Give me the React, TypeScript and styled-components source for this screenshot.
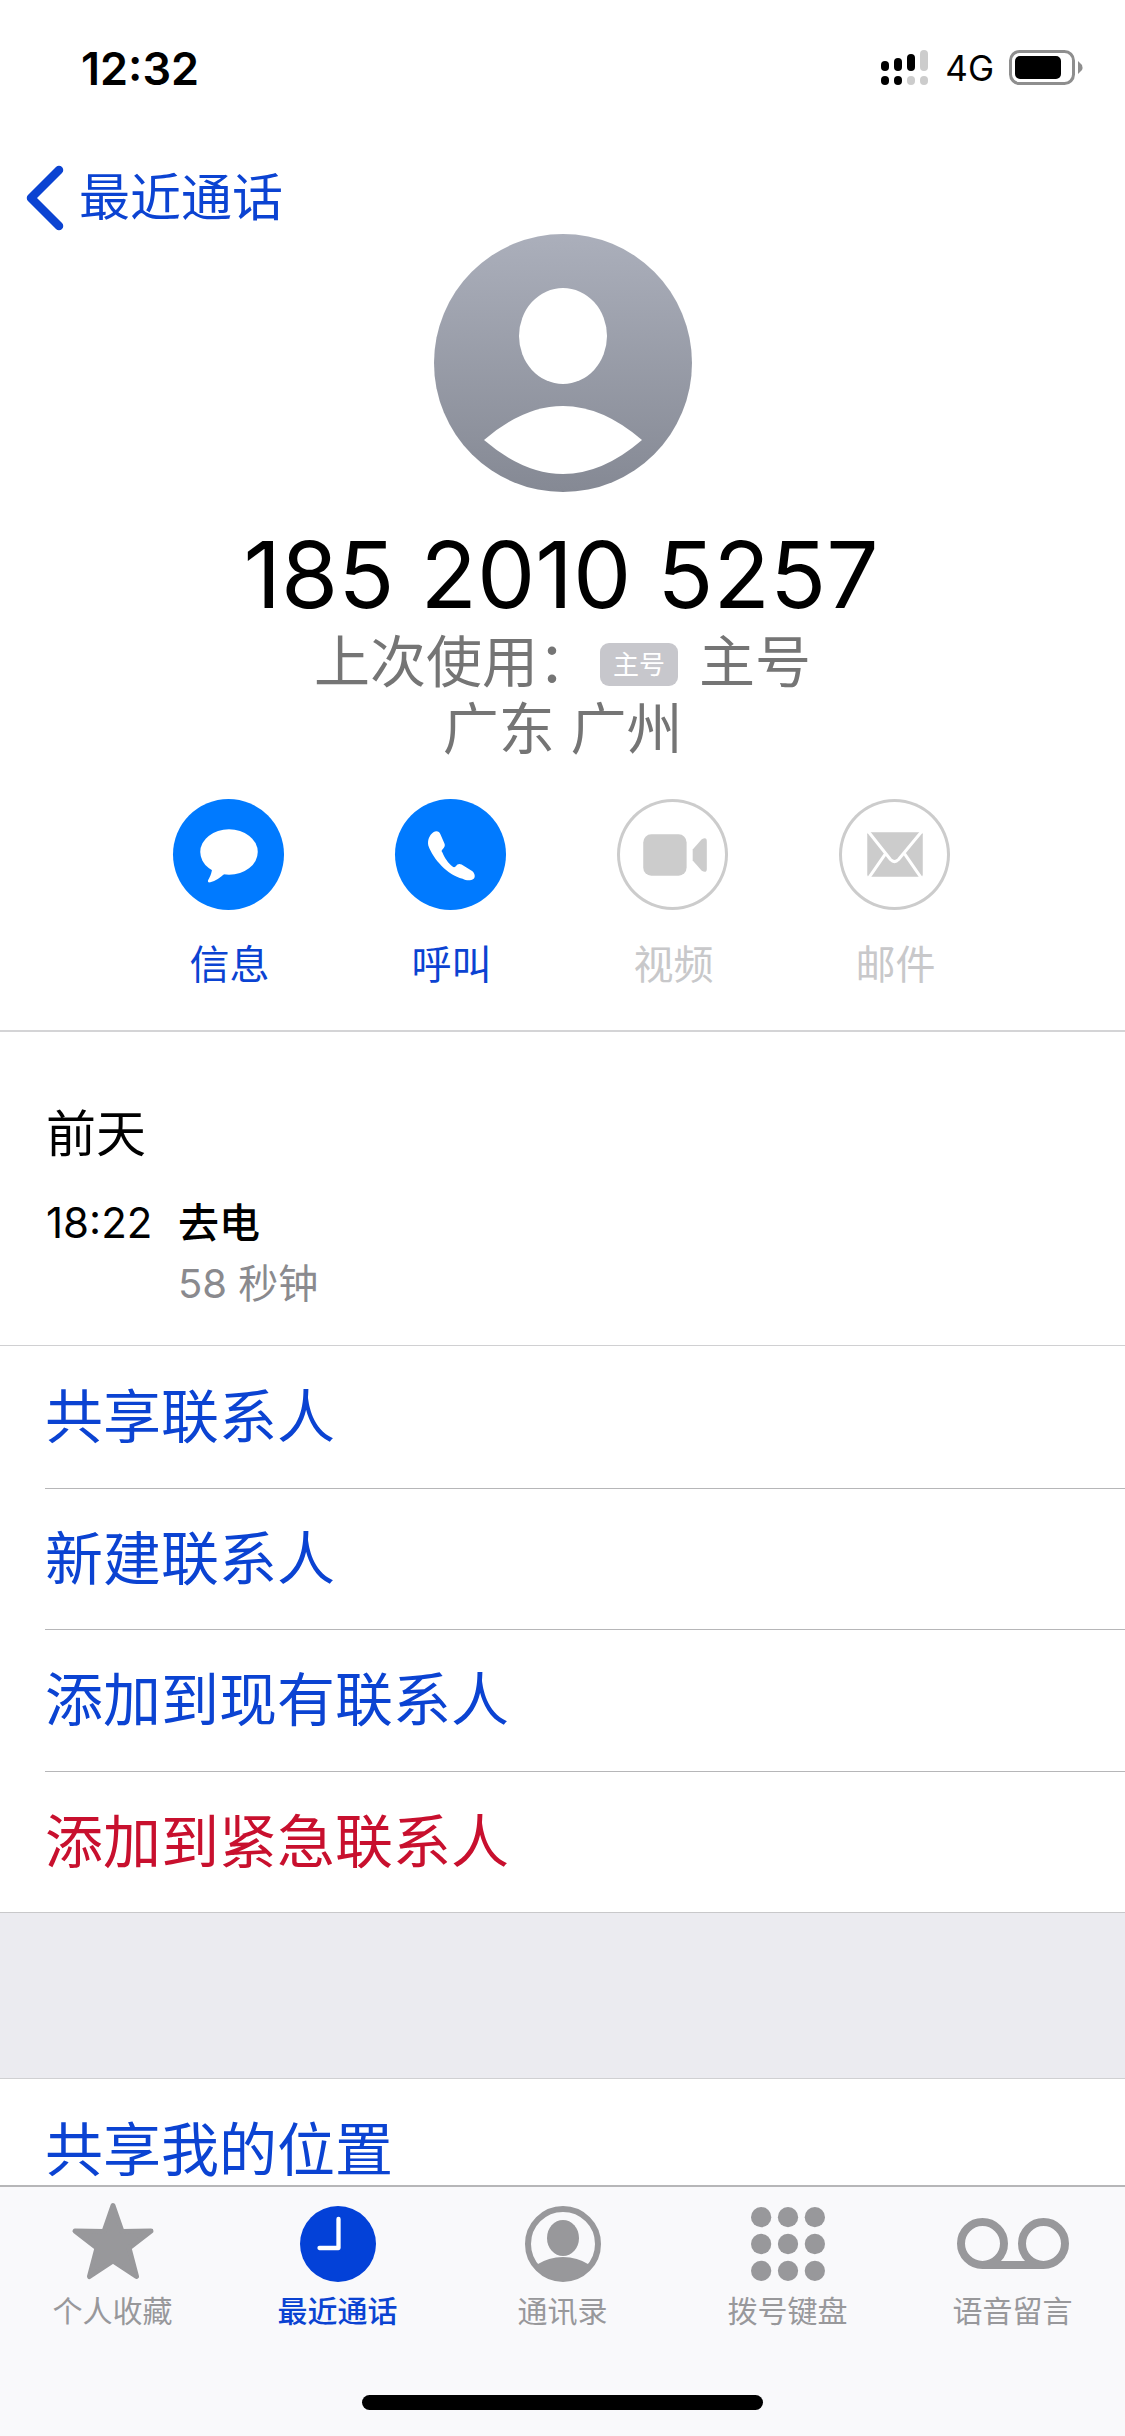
import React from 'react';
import styled, { createGlobalStyle } from 'styled-components';

const BLUE = '#0b43d2';
const RED = '#c8102e';
const GREY_ICON = '#98989b';
const LINE = '#b6b6b8';

const GlobalStyle = createGlobalStyle`
    html, body {
        margin: 0;
        padding: 0;
        background: #fff;
    }
    * {
        box-sizing: border-box;
    }
`;

const SignalIcon = () => (
    <svg width="48" height="36" viewBox="0 0 48 36">
        <rect x="0" y="11" width="8" height="10" rx="4" fill="#000" />
        <rect x="13" y="8" width="8" height="13" rx="4" fill="#000" />
        <rect x="26" y="4" width="8" height="17" rx="4" fill="#000" />
        <rect x="39" y="0" width="8" height="21" rx="4" fill="#ccc" />
        <rect x="0" y="26" width="8" height="9" rx="4" fill="#000" />
        <rect x="13" y="26" width="8" height="9" rx="4" fill="#000" />
        <rect x="26" y="26" width="8" height="9" rx="4" fill="#ccc" />
        <rect x="39" y="26" width="8" height="9" rx="4" fill="#ccc" />
    </svg>
);

const BatteryIcon = () => (
    <svg width="74" height="36" viewBox="0 0 74 36">
        <rect x="1.500" y="1.500" width="63" height="32" rx="9" fill="none" stroke="#8e8e8e" strokeWidth="3" />
        <rect x="6" y="6" width="46" height="23" rx="5" fill="#000" />
        <path d="M69 11 L73 15 Q74 17.500 73 20 L69 24 Z" fill="#8e8e8e" />
    </svg>
);

const BackChevron = () => (
    <svg width="40" height="68" viewBox="0 0 40 68">
        <path d="M33 7 L5 35 L33 63" fill="none" stroke={BLUE} strokeWidth="8.500" strokeLinecap="round" strokeLinejoin="round" />
    </svg>
);

const AvatarIcon = () => (
    <svg width="258" height="258" viewBox="0 0 258 258">
        <defs>
            <linearGradient id="avatarFill" x1="0" y1="0" x2="0" y2="1">
                <stop offset="0" stopColor="#abafbb" />
                <stop offset="1" stopColor="#858994" />
            </linearGradient>
        </defs>
        <circle cx="129" cy="129" r="129" fill="url(#avatarFill)" />
        <ellipse cx="129" cy="102" rx="44" ry="48" fill="#fff" />
        <path d="M50 206 Q129 138 208 206 Q129 274 50 206 Z" fill="#fff" />
    </svg>
);

const BubbleGlyph = () => (
    <svg viewBox="0 0 110 110">
        <ellipse cx="55.500" cy="52.500" rx="28.500" ry="22.500" fill="#fff" />
        <path d="M39 66 C39 72 37 77 35 80 C34 82 35 83 37 82.500 C42 81 47 78 51 74 Z" fill="#fff" />
    </svg>
);

const PhoneGlyph = () => (
    <svg viewBox="0 0 110 110">
        <path
            d="M38 33 C41 31 44 32 45 35 L49 44 C50 46 49 48 47 50 C46 51 46 52 47 53 C49 58 53 64 57 67 C58 68 59 68 60 67 C62 64 64 64 66 65 L76 71 C79 73 80 77 78 79 C75 81 71 81 67 79 C52 75 38 60 33 46 C32 41 34 36 38 33 Z"
            fill="#fff"
        />
    </svg>
);

const VideoGlyph = () => (
    <svg viewBox="0 0 110 110">
        <rect x="26" y="35" width="43" height="41" rx="8" fill="#ccc" />
        <path d="M75 50 L84 40 Q89 37 89 42 L89 69 Q89 74 84 71 L75 61 Z" fill="#ccc" />
    </svg>
);

const MailGlyph = () => (
    <svg viewBox="0 0 110 110">
        <rect x="28" y="33" width="55" height="44" rx="2" fill="#ccc" />
        <path d="M28 31 L51 60 Q55 64 59 60 L83 31 M29 79 L47 53 M82 79 L64 53" fill="none" stroke="#fff" strokeWidth="3" />
    </svg>
);

const StarIcon = () => (
    <svg width="84" height="84" viewBox="0 0 84 84">
        <path
            d="M42 3.500 L51 29.500 L80 29 L58 46 L65.500 74.500 L42 59 L18.500 74.500 L26 46 L4 29 L33 29.500 Z"
            fill={GREY_ICON}
            stroke={GREY_ICON}
            strokeWidth="5"
            strokeLinejoin="round"
        />
    </svg>
);

const ClockIcon = () => (
    <svg width="76" height="76" viewBox="0 0 76 76">
        <circle cx="38" cy="38" r="38" fill="#0341d8" />
        <path d="M38.500 13 L38.500 42 L19.500 42" fill="none" stroke="#fff" strokeWidth="4.300" strokeLinecap="round" strokeLinejoin="round" />
    </svg>
);

const PersonIcon = () => (
    <svg width="78" height="76" viewBox="0 0 78 76">
        <defs>
            <clipPath id="personClip">
                <circle cx="39" cy="38" r="37" />
            </clipPath>
        </defs>
        <circle cx="39" cy="38" r="35" fill="none" stroke={GREY_ICON} strokeWidth="6" />
        <ellipse cx="39" cy="32" rx="16" ry="18" fill={GREY_ICON} />
        <ellipse cx="39" cy="76" rx="36" ry="25" fill={GREY_ICON} clipPath="url(#personClip)" />
    </svg>
);

const KeypadIcon = () => {
    const spots = [10, 36.500, 63];
    return (
        <svg width="74" height="74" viewBox="0 0 73 73">
            {spots.map((cy) =>
                spots.map((cx) => <circle key={`${cx}-${cy}`} cx={cx} cy={cy} r="10" fill={GREY_ICON} />)
            )}
        </svg>
    );
};

const VoicemailIcon = () => (
    <svg width="112" height="52" viewBox="0 0 112 52">
        <circle cx="25.500" cy="25.500" r="21.500" fill="none" stroke={GREY_ICON} strokeWidth="8" />
        <circle cx="86.500" cy="25.500" r="21.500" fill="none" stroke={GREY_ICON} strokeWidth="8" />
        <path d="M25.500 47 L86.500 47" stroke={GREY_ICON} strokeWidth="8" />
    </svg>
);

const actions = [
    { label: '信息', active: true, glyph: <BubbleGlyph /> },
    { label: '呼叫', active: true, glyph: <PhoneGlyph /> },
    { label: '视频', active: false, glyph: <VideoGlyph /> },
    { label: '邮件', active: false, glyph: <MailGlyph /> },
];

const links = [
    { label: '共享联系人', danger: false },
    { label: '新建联系人', danger: false },
    { label: '添加到现有联系人', danger: false },
    { label: '添加到紧急联系人', danger: true },
];

const tabs = [
    { label: '个人收藏', icon: <StarIcon />, active: false },
    { label: '最近通话', icon: <ClockIcon />, active: true },
    { label: '通讯录', icon: <PersonIcon />, active: false },
    { label: '拨号键盘', icon: <KeypadIcon />, active: false },
    { label: '语音留言', icon: <VoicemailIcon />, active: false },
];

const App = () => {
    return (
        <Screen>
            <GlobalStyle />
            <Content>
                <StatusBar>
                    <Clock>12:32</Clock>
                    <StatusRight>
                        <SignalIcon />
                        <Network>4G</Network>
                        <BatteryIcon />
                    </StatusRight>
                </StatusBar>
                <NavBar>
                    <BackChevron />
                    <BackLabel>最近通话</BackLabel>
                </NavBar>
                <Profile>
                    <AvatarIcon />
                    <PhoneNumber>185 2010 5257</PhoneNumber>
                    <LastUsed>
                        <span>上次使用：</span>
                        <SimBadge>主号</SimBadge>
                        <span>主号</span>
                    </LastUsed>
                    <Location>广东 广州</Location>
                    <ActionRow>
                        {actions.map((action) => (
                            <Action key={action.label}>
                                <ActionCircle $active={action.active}>{action.glyph}</ActionCircle>
                                <ActionLabel $active={action.active}>{action.label}</ActionLabel>
                            </Action>
                        ))}
                    </ActionRow>
                </Profile>
                <CallLog>
                    <CallDay>前天</CallDay>
                    <CallRow>
                        <CallTime>18:22</CallTime>
                        <div>
                            <CallType>去电</CallType>
                            <CallLength>58 秒钟</CallLength>
                        </div>
                    </CallRow>
                </CallLog>
                <LinkGroup>
                    {links.map((link) => (
                        <LinkRow key={link.label} $danger={link.danger}>
                            {link.label}
                        </LinkRow>
                    ))}
                </LinkGroup>
                <GroupGap />
                <LinkGroup>
                    <LinkRow $danger={false}>共享我的位置</LinkRow>
                </LinkGroup>
            </Content>
            <TabBar>
                <TabList>
                    {tabs.map((tab) => (
                        <Tab key={tab.label}>
                            <TabIconSlot>{tab.icon}</TabIconSlot>
                            <TabLabel $active={tab.active}>{tab.label}</TabLabel>
                        </Tab>
                    ))}
                </TabList>
                <HomeIndicator />
            </TabBar>
        </Screen>
    );
};

export default App;

const Screen = styled.div`
    width: 1125px;
    height: 2436px;
    display: flex;
    flex-direction: column;
    overflow: hidden;
    background: #fff;
    font-family: Inter, 'Noto Sans CJK SC', sans-serif;
`;

const Content = styled.div`
    flex: 1;
    min-height: 0;
    overflow: hidden;
`;

const StatusBar = styled.div`
    height: 160px;
    padding: 42px 42px 0 81px;
    display: flex;
    justify-content: space-between;
    align-items: flex-start;
`;

const Clock = styled.div`
    font-size: 45px;
    line-height: 54px;
    font-weight: 600;
    color: #000;
`;

const StatusRight = styled.div`
    display: flex;
    align-items: center;
    margin-top: 8px;
`;

const Network = styled.div`
    font-size: 35px;
    line-height: 36px;
    margin: 0 15px 0 16px;
    color: #000;
`;

const NavBar = styled.div`
    height: 74px;
    padding-left: 26px;
    display: flex;
    align-items: center;
    gap: 13px;
`;

const BackLabel = styled.div`
    margin-top: 2px;
    font-size: 51px;
    line-height: 74px;
    color: ${BLUE};
`;

const Profile = styled.div`
    height: 798px;
    display: flex;
    flex-direction: column;
    align-items: center;
    border-bottom: 2px solid #d4d4d6;
`;

const PhoneNumber = styled.div`
    margin: 32px 3px 0 0;
    font-size: 92.500px;
    line-height: 100px;
    color: #000;
`;

const LastUsed = styled.div`
    margin-top: 4px;
    height: 68px;
    display: flex;
    align-items: center;
    font-size: 56px;
    line-height: 68px;
    color: #757575;
`;

const SimBadge = styled.span`
    width: 78px;
    height: 43px;
    margin: 4px 21px 0 6px;
    display: flex;
    align-items: center;
    justify-content: center;
    border-radius: 9px;
    background: #c7c7cc;
    color: #fff;
    font-size: 26px;
    line-height: 43px;
`;

const Location = styled.div`
    font-size: 56px;
    line-height: 66px;
    color: #757575;
`;

const ActionRow = styled.div`
    margin: 37px 3px 0 0;
    display: grid;
    grid-template-columns: repeat(4, 222px);
`;

const Action = styled.div`
    display: flex;
    flex-direction: column;
    align-items: center;
`;

const ActionCircle = styled.div<{ $active: boolean }>`
    width: 111px;
    height: 111px;
    border-radius: 50%;
    background: ${(p) => (p.$active ? '#007aff' : '#fff')};
    box-shadow: ${(p) => (p.$active ? 'none' : 'inset 0 0 0 3px #ccc')};

    svg {
        display: block;
        width: 100%;
        height: 100%;
    }
`;

const ActionLabel = styled.div<{ $active: boolean }>`
    margin: 31px 0 0 3px;
    font-size: 40px;
    line-height: 48px;
    color: ${(p) => (p.$active ? BLUE : '#c8c8ca')};
`;

const CallLog = styled.div`
    height: 313px;
    padding: 70px 0 0 46px;
`;

const CallDay = styled.div`
    font-size: 50px;
    line-height: 64px;
    color: #000;
`;

const CallRow = styled.div`
    margin-top: 31px;
    display: flex;
`;

const CallTime = styled.div`
    width: 132px;
    font-size: 42px;
    line-height: 52px;
    color: #000;
`;

const CallType = styled.div`
    font-size: 41px;
    line-height: 52px;
    font-weight: 500;
    color: #000;
`;

const CallLength = styled.div`
    margin-top: 9px;
    font-size: 40px;
    line-height: 52px;
    color: #8a8a8e;
`;

const LinkGroup = styled.div`
    border-top: 1px solid #d0d0d2;
    border-bottom: 1px solid #c8c8ca;
    padding-left: 45px;
`;

const LinkRow = styled.div<{ $danger: boolean }>`
    height: 141.500px;
    display: flex;
    align-items: center;
    font-size: 58px;
    line-height: 64px;
    color: ${(p) => (p.$danger ? RED : BLUE)};
    border-top: 1px solid ${LINE};

    &:first-child {
        border-top-color: transparent;
    }
`;

const GroupGap = styled.div`
    height: 165px;
    background: #ebebf0;
`;

const TabBar = styled.div`
    height: 251px;
    flex-shrink: 0;
    background: #f9f9fb;
    border-top: 2px solid ${LINE};
`;

const TabList = styled.div`
    padding-top: 15px;
    display: grid;
    grid-template-columns: repeat(5, 225px);
`;

const Tab = styled.div`
    display: flex;
    flex-direction: column;
    align-items: center;
`;

const TabIconSlot = styled.div`
    height: 84px;
    display: flex;
    align-items: center;
    justify-content: center;
`;

const TabLabel = styled.div<{ $active: boolean }>`
    margin-top: 7px;
    font-size: 30px;
    line-height: 36px;
    font-weight: ${(p) => (p.$active ? 500 : 400)};
    color: ${(p) => (p.$active ? BLUE : '#98989b')};
`;

const HomeIndicator = styled.div`
    width: 401px;
    height: 15px;
    margin: 66px auto 0;
    border-radius: 8px;
    background: #000;
`;
